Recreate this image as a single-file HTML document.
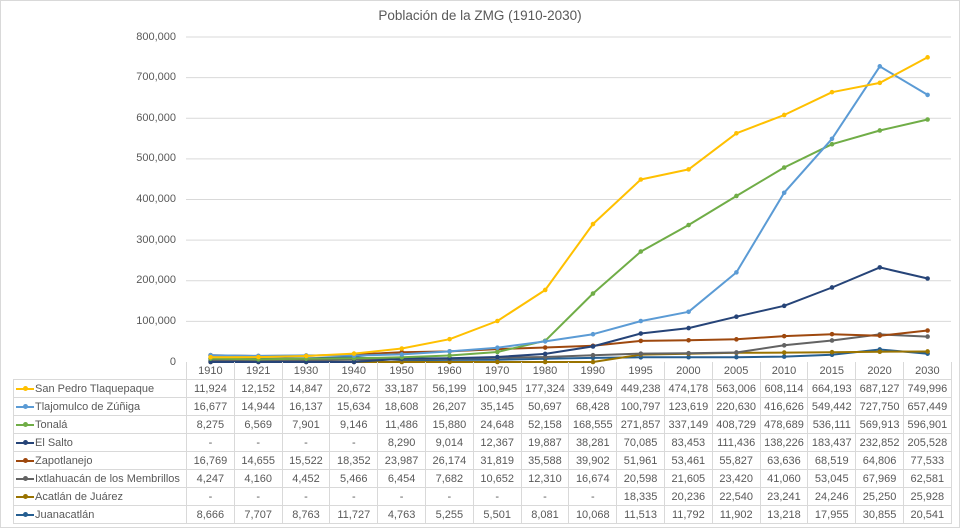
<!DOCTYPE html>
<html><head><meta charset="utf-8"><style>
body{margin:0;width:960px;height:528px;background:#fff;font-family:"Liberation Sans",Arial,sans-serif;color:#595959;overflow:hidden;position:relative}
.frame{position:absolute;left:0;top:0;width:958px;height:526px;border:1px solid #d9d9d9}
.title{position:absolute;top:8px;left:0;width:960px;text-align:center;font-size:13.5px;color:#595959}
.yl{position:absolute;right:784px;font-size:11px;text-align:right;line-height:12px}
table{position:absolute;left:13px;top:362px;border-collapse:collapse;font-size:11px;table-layout:fixed}
td{border:1px solid #d9d9d9;height:17px;padding:0;text-align:center;white-space:nowrap;overflow:hidden;width:46.8px}
td.l{width:172px;text-align:left;padding-left:0}
tr.h td.l{border:none;border-right:1px solid #d9d9d9}
tr.h td{border-top:none}
.k{display:inline-block;width:18px;height:2px;vertical-align:middle;position:relative;margin-right:1px;margin-left:2px}
.k:after{content:"";position:absolute;left:7px;top:-2px;width:5px;height:5px;border-radius:50%;background:inherit}
svg{position:absolute;left:0;top:0}
</style></head><body>
<div class="frame"></div>
<div class="title">Población de la ZMG (1910-2030)</div>
<div class="yl" style="top:31px">800,000</div>
<div class="yl" style="top:71px">700,000</div>
<div class="yl" style="top:112px">600,000</div>
<div class="yl" style="top:152px">500,000</div>
<div class="yl" style="top:193px">400,000</div>
<div class="yl" style="top:234px">300,000</div>
<div class="yl" style="top:274px">200,000</div>
<div class="yl" style="top:315px">100,000</div>
<div class="yl" style="top:356px">0</div>
<svg id="s" width="960" height="528"></svg>
<table>
<tr class="h"><td class="l"></td><td>1910</td><td>1921</td><td>1930</td><td>1940</td><td>1950</td><td>1960</td><td>1970</td><td>1980</td><td>1990</td><td>1995</td><td>2000</td><td>2005</td><td>2010</td><td>2015</td><td>2020</td><td>2030</td></tr>
<tr><td class="l"><span class="k" style="background:#FFC000"></span>San Pedro Tlaquepaque</td><td>11,924</td><td>12,152</td><td>14,847</td><td>20,672</td><td>33,187</td><td>56,199</td><td>100,945</td><td>177,324</td><td>339,649</td><td>449,238</td><td>474,178</td><td>563,006</td><td>608,114</td><td>664,193</td><td>687,127</td><td>749,996</td></tr>
<tr><td class="l"><span class="k" style="background:#5B9BD5"></span>Tlajomulco de Zúñiga</td><td>16,677</td><td>14,944</td><td>16,137</td><td>15,634</td><td>18,608</td><td>26,207</td><td>35,145</td><td>50,697</td><td>68,428</td><td>100,797</td><td>123,619</td><td>220,630</td><td>416,626</td><td>549,442</td><td>727,750</td><td>657,449</td></tr>
<tr><td class="l"><span class="k" style="background:#70AD47"></span>Tonalá</td><td>8,275</td><td>6,569</td><td>7,901</td><td>9,146</td><td>11,486</td><td>15,880</td><td>24,648</td><td>52,158</td><td>168,555</td><td>271,857</td><td>337,149</td><td>408,729</td><td>478,689</td><td>536,111</td><td>569,913</td><td>596,901</td></tr>
<tr><td class="l"><span class="k" style="background:#264478"></span>El Salto</td><td>-</td><td>-</td><td>-</td><td>-</td><td>8,290</td><td>9,014</td><td>12,367</td><td>19,887</td><td>38,281</td><td>70,085</td><td>83,453</td><td>111,436</td><td>138,226</td><td>183,437</td><td>232,852</td><td>205,528</td></tr>
<tr><td class="l"><span class="k" style="background:#9E480E"></span>Zapotlanejo</td><td>16,769</td><td>14,655</td><td>15,522</td><td>18,352</td><td>23,987</td><td>26,174</td><td>31,819</td><td>35,588</td><td>39,902</td><td>51,961</td><td>53,461</td><td>55,827</td><td>63,636</td><td>68,519</td><td>64,806</td><td>77,533</td></tr>
<tr><td class="l"><span class="k" style="background:#636363"></span>Ixtlahuacán de los Membrillos</td><td>4,247</td><td>4,160</td><td>4,452</td><td>5,466</td><td>6,454</td><td>7,682</td><td>10,652</td><td>12,310</td><td>16,674</td><td>20,598</td><td>21,605</td><td>23,420</td><td>41,060</td><td>53,045</td><td>67,969</td><td>62,581</td></tr>
<tr><td class="l"><span class="k" style="background:#997300"></span>Acatlán de Juárez</td><td>-</td><td>-</td><td>-</td><td>-</td><td>-</td><td>-</td><td>-</td><td>-</td><td>-</td><td>18,335</td><td>20,236</td><td>22,540</td><td>23,241</td><td>24,246</td><td>25,250</td><td>25,928</td></tr>
<tr><td class="l"><span class="k" style="background:#255E91"></span>Juanacatlán</td><td>8,666</td><td>7,707</td><td>8,763</td><td>11,727</td><td>4,763</td><td>5,255</td><td>5,501</td><td>8,081</td><td>10,068</td><td>11,513</td><td>11,792</td><td>11,902</td><td>13,218</td><td>17,955</td><td>30,855</td><td>20,541</td></tr>
</table>
<script>
var s=document.getElementById('s'),h='';
for(var i=1;i<=8;i++){var y=362-i*325/8;h+='<line x1="186" x2="951" y1="'+y+'" y2="'+y+'" stroke="#d9d9d9"/>';}
var rows=document.querySelectorAll('tr'),cols=['#FFC000','#5B9BD5','#70AD47','#264478','#9E480E','#636363','#997300','#255E91'];
for(var r=8;r>=1;r--){var c=rows[r].querySelectorAll('td'),pts=[],dots='';
for(var j=1;j<c.length;j++){var v=parseInt(c[j].textContent.replace(/,/g,''))||0;var x=186.7+23.9+(j-1)*47.8,y=362-v*325/800000;pts.push(x.toFixed(1)+','+y.toFixed(1));dots+='<circle cx="'+x+'" cy="'+y+'" r="2.3" fill="'+cols[r-1]+'"/>';}
h+='<polyline fill="none" stroke-width="2" stroke-linejoin="round" stroke="'+cols[r-1]+'" points="'+pts.join(' ')+'"/>'+dots;}
s.innerHTML=h;
</script>
</body></html>
